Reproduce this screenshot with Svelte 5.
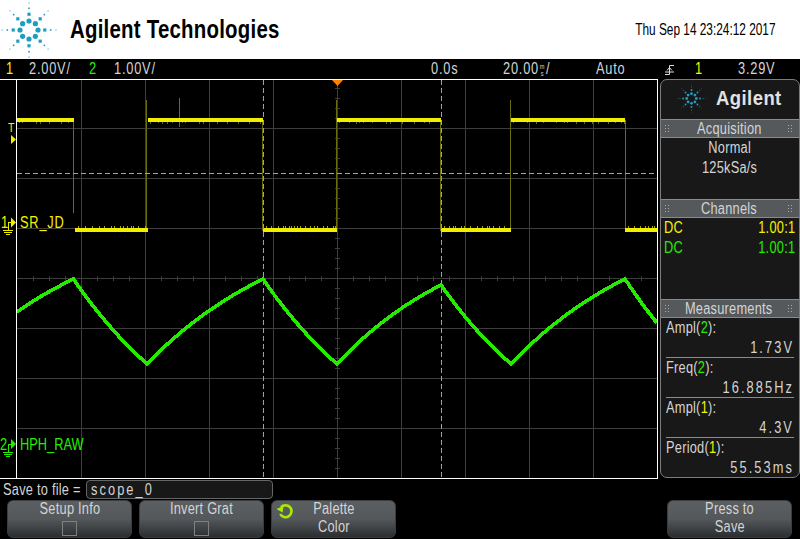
<script>
  const rayAngles = [0, 45, 90, 135, 180, 225, 270, 315];
  const rings = [
    { r: 9, s: 2.6, round: true },
    { r: 15.8, s: 1.6 },
    { r: 21.7, s: 0.8 },
    { r: 27, s: 0.5 }
  ];
  const dots = rings.flatMap((ring) =>
    rayAngles.map((a) => ({
      x: ring.r * Math.cos((a * Math.PI) / 180),
      y: ring.r * Math.sin((a * Math.PI) / 180),
      s: ring.s,
      round: ring.round
    }))
  );

  const vGrid = [81, 145, 209, 273, 337, 401, 465, 529, 593];
  const hGrid = [128, 178, 228, 278, 328, 378, 428];
  const vTicks = [];
  for (let y = 88; y < 478; y += 10) vTicks.push(y);
  const hTicks = [];
  for (let x = 33; x < 657; x += 16) hTicks.push(x);

  let seed = 1234;
  const rnd = () => ((seed = (seed * 1103515245 + 12345) & 0x7fffffff) / 0x7fffffff);

  const highs = [[17, 74], [148, 263], [337, 441], [511, 625]];
  const lows = [[75, 148], [263, 337], [441, 511], [625, 657]];
  let noiseHigh = '';
  for (const [a, b] of highs) {
    for (let x = a + 2; x < b; x += 3 + Math.floor(rnd() * 12)) {
      noiseHigh += `M${x + 0.5} 121V${123 + Math.floor(rnd() * 2)}`;
    }
  }
  let noiseLow = '';
  for (const [a, b] of lows) {
    for (let x = a + 3; x < b - 1; x += 2 + Math.floor(rnd() * 6)) {
      noiseLow += `M${x + 0.5} 228V226`;
    }
  }

  const edges = [
    [73.5, 120, 213], [146.5, 100, 228], [179.5, 98, 127], [262.5, 120, 231],
    [336.5, 100, 228], [440.5, 120, 231], [510.5, 100, 228], [625.5, 120, 231]
  ];

  function curve(x0, y0, x1, y1, bend) {
    const pts = [];
    for (let i = 0; i <= 24; i++) {
      const t = i / 24;
      const k = (1 - Math.exp(-bend * t)) / (1 - Math.exp(-bend));
      pts.push(`${(x0 + (x1 - x0) * t).toFixed(1)},${(y0 + (y1 - y0) * k).toFixed(1)}`);
    }
    return pts;
  }
  const green = [
    ...curve(17, 312, 73.5, 279, 0.4),
    ...curve(73.5, 279, 147, 364, 0.5),
    ...curve(147, 364, 263, 279, 0.75),
    ...curve(263, 279, 337, 364, 0.5),
    ...curve(337, 364, 441, 285, 0.75),
    ...curve(441, 285, 511, 364, 0.5),
    ...curve(511, 364, 625, 279, 0.75),
    ...curve(625, 279, 657, 323, 0.2)
  ].join(' ');

  const measurements = [
    { label: 'Ampl', ch: '2', value: '1.73V' },
    { label: 'Freq', ch: '2', value: '16.885Hz' },
    { label: 'Ampl', ch: '1', value: '4.3V' },
    { label: 'Period', ch: '1', value: '55.53ms' }
  ];
</script>

{#snippet logo(cls)}
  <svg class={cls} viewBox="-29 -29 58 58" aria-hidden="true">
    {#each dots as d}
      {#if d.round}
        <circle cx={d.x} cy={d.y} r={d.s} fill="#1f9dc0" />
      {:else}
        <rect x={d.x - d.s} y={d.y - d.s} width={d.s * 2} height={d.s * 2} fill="#1f9dc0" />
      {/if}
    {/each}
  </svg>
{/snippet}

{#snippet grip()}
  <svg class="grip" viewBox="0 0 5 8" aria-hidden="true">
    <path d="M0 0h1v1H0zM3 0h1v1H3zM0 3h1v1H0zM3 3h1v1H3zM0 6h1v1H0zM3 6h1v1H3z" fill="#aaa" />
  </svg>
{/snippet}

<div class="scope">
  <header class="brand">
    {@render logo('logo-large')}
    <h1>Agilent Technologies</h1>
    <time>Thu Sep 14 23:24:12 2017</time>
  </header>

  <div class="status">
    <span class="n yellow s-ch1">1</span>
    <span class="n s-v1">2.00V/</span>
    <span class="n green s-ch2">2</span>
    <span class="n s-v2">1.00V/</span>
    <span class="n s-delay">0.0s</span>
    <span class="n s-time"><span>20.00</span><span class="stack"><i>m</i><i>s</i></span><span>/</span></span>
    <span class="n s-mode">Auto</span>
    <svg class="s-edge" viewBox="0 0 9 11" aria-hidden="true">
      <path d="M0 10.5H4.5V1.5H9M2 6.5L4.5 3.5L7 6.5M0 8H9" fill="none" stroke="#ddd" stroke-width="1" />
    </svg>
    <span class="n yellow s-src">1</span>
    <span class="n s-level">3.29V</span>
  </div>

  <div class="middle">
    <div class="screen">
      <svg class="canvas" viewBox="0 0 658 400" aria-hidden="true">
        <g transform="translate(0,-79)">
          <g stroke="#3d3d3d" stroke-width="1" shape-rendering="crispEdges">
            {#each vGrid as x}<line x1={x + 0.5} x2={x + 0.5} y1="80" y2="478" />{/each}
            {#each hGrid as y}<line x1="17" x2="657" y1={y + 0.5} y2={y + 0.5} />{/each}
            {#each vTicks as y}<line x1="335" x2="340" y1={y + 0.5} y2={y + 0.5} />{/each}
            {#each hTicks as x}<line x1={x + 0.5} x2={x + 0.5} y1="276" y2="281" />{/each}
          </g>

          <g stroke="#6c6c0c" stroke-width="1" shape-rendering="crispEdges">
            {#each edges as [x, a, b]}<line x1={x} x2={x} y1={a} y2={b} />{/each}
            <path d={noiseHigh} fill="none" />
          </g>
          <path d={noiseLow} stroke="#a8a800" stroke-width="1" shape-rendering="crispEdges" fill="none" />
          <g fill="#f2ee00" shape-rendering="crispEdges">
            {#each highs as [a, b]}<rect x={a} y="118" width={b - a} height="4" />{/each}
            {#each lows as [a, b]}<rect x={a} y="228" width={b - a} height="4" />{/each}
          </g>

          <g stroke="#ef9322" stroke-width="1" shape-rendering="crispEdges" stroke-dasharray="5 3">
            <line x1="263.5" x2="263.5" y1="80" y2="478" />
            <line x1="441.5" x2="441.5" y1="80" y2="478" />
            <line x1="17" x2="657" y1="173.5" y2="173.5" />
          </g>

          <polygon points="332,80 343,80 337.5,86" fill="#ff8000" />

          <polyline points={green} fill="none" stroke="#23ec00" stroke-width="3.6" stroke-linejoin="round" shape-rendering="crispEdges" />

          <g fill="#f2ee00">
            <polygon points="11,135 16,139.5 11,144" />
            <polygon points="11,217.5 16,222.5 11,227.5" />
          </g>
          <path d="M11 222.5H8.5V230.5M3 230.5H13M4 232.5H12M6 234.5H10" fill="none" stroke="#f2ee00" stroke-width="1" shape-rendering="crispEdges" />
          <polygon points="11,439 16,444 11,449" fill="#23ec00" />
          <path d="M11 444.5H8.5V452.5M3 452.5H13M4 454.5H12M6 456.5H10" fill="none" stroke="#23ec00" stroke-width="1" shape-rendering="crispEdges" />
        </g>
      </svg>
      <span class="mark n t yellow">T</span>
      <span class="mark n n1 yellow">1</span>
      <span class="mark n l1 yellow">SR_JD</span>
      <span class="mark n n2 green">2</span>
      <span class="mark n l2 green">HPH_RAW</span>
    </div>

    <aside class="panel">
      <div class="panel-logo">
        {@render logo('logo-small')}
        <strong>Agilent</strong>
      </div>

      <div class="bar">{@render grip()}<span class="n c">Acquisition</span>{@render grip()}</div>
      <div class="acq">
        <p class="n c">Normal</p>
        <p class="n c">125kSa/s</p>
      </div>

      <div class="bar">{@render grip()}<span class="n c">Channels</span>{@render grip()}</div>
      <div class="channels">
        <p class="yellow"><span class="n">DC</span><span class="n r">1.00:1</span></p>
        <p class="green"><span class="n">DC</span><span class="n r">1.00:1</span></p>
      </div>

      <div class="bar">{@render grip()}<span class="n c">Measurements</span>{@render grip()}</div>
      <div class="meas">
        {#each measurements as m}
          <div class="meas-row">
            <p class="n lab">{m.label}(<span class={m.ch === '1' ? 'yellow' : 'green'}>{m.ch}</span>):</p>
            <p class="n r val">{m.value}</p>
          </div>
        {/each}
      </div>
    </aside>
  </div>

  <div class="save">
    <label class="n" for="fname">Save to file =</label>
    <div id="fname" class="field"><span class="n">scope_0</span></div>
  </div>

  <div class="softkeys">
    <div class="key"><span class="n c">Setup Info</span><i class="check"></i></div>
    <div class="key"><span class="n c">Invert Grat</span><i class="check"></i></div>
    <div class="key">
      <svg class="cycle" viewBox="0 0 18 18" aria-hidden="true">
        <path d="M5 5.2A6 6 0 1 1 4.2 12" fill="none" stroke="#a9ec00" stroke-width="2.6" />
        <polygon points="0.5,7 7.5,4 6.5,10.5" fill="#a9ec00" />
      </svg>
      <span class="n c">Palette</span><span class="n c">Color</span>
    </div>
    <div class="spacer"></div>
    <div class="key"><span class="n c">Press to</span><span class="n c">Save</span></div>
  </div>
</div>

<style>
  :global(body) {
    margin: 0;
    background: #000;
  }
  .scope {
    width: 800px;
    height: 539px;
    overflow: hidden;
    background: #000;
    color: #d4d4d4;
    font-family: "Liberation Sans", sans-serif;
    font-size: 16px;
    letter-spacing: 0.3px;
  }
  p { margin: 0; }
  .yellow { color: #f6f200; }
  .green { color: #25ec00; }
  .n {
    display: inline-block;
    white-space: nowrap;
    transform: scaleX(0.8);
    transform-origin: left center;
  }
  .c { transform-origin: center center; }
  .r { transform-origin: right center; }

  .brand {
    height: 59px;
    background: #fff;
    display: flex;
    align-items: center;
    color: #000;
  }
  .logo-large { width: 58px; height: 58px; flex: none; margin-right: 12px; }
  .brand h1 {
    margin: 0;
    font-size: 26px;
    font-weight: 700;
    letter-spacing: 0.3px;
    white-space: nowrap;
    transform: scaleX(0.785);
    transform-origin: left center;
  }
  .brand time {
    margin-left: auto;
    margin-right: 25px;
    font-size: 16px;
    letter-spacing: 0;
    white-space: nowrap;
    transform: scaleX(0.74);
    transform-origin: right center;
  }

  .status {
    height: 20px;
    display: flex;
    align-items: center;
    line-height: 20px;
    letter-spacing: 1px;
  }
  .s-ch1 { margin-left: 6px; width: 23px; }
  .s-v1 { width: 60px; }
  .s-ch2 { width: 25px; }
  .s-v2 { width: 317px; }
  .s-delay { width: 72px; }
  .s-time { width: 93px; display: inline-flex; align-items: center; }
  .s-mode { width: 69px; }
  .s-edge { width: 9px; height: 11px; margin-right: 21px; flex: none; }
  .s-src { width: 43px; }
  .stack {
    display: inline-flex;
    flex-direction: column;
    line-height: 7px;
    font-size: 7px;
    letter-spacing: 0;
    align-items: center;
    margin: 2px 2px 0 1px;
  }
  .stack i { font-style: normal; }

  .middle {
    height: 400px;
    display: flex;
  }
  .screen {
    width: 658px;
    height: 400px;
    box-sizing: border-box;
    position: relative;
    flex: none;
    border-top: 1px solid #fff;
    border-bottom: 1px solid #fff;
    border-right: 1px solid #fff;
    overflow: hidden;
  }
  .canvas {
    position: absolute;
    left: 0;
    top: -1px;
    width: 658px;
    height: 400px;
  }
  .screen::before {
    content: "";
    position: absolute;
    left: 16px;
    top: 0;
    bottom: 0;
    width: 1px;
    background: #fff;
    z-index: 1;
  }
  .mark { position: absolute; line-height: 16px; }
  .t { left: 8px; top: 40px; font-size: 13px; }
  .n1 { left: 1px; top: 135px; }
  .l1 { left: 20px; top: 135px; letter-spacing: 1px; }
  .n2 { left: 0; top: 357px; }
  .l2 { left: 20px; top: 357px; letter-spacing: 0; }

  .panel {
    width: 140px;
    height: 399px;
    margin-left: 2px;
    box-sizing: border-box;
    background: #181818;
    border: 1px solid #7c7c7c;
    border-radius: 7px;
    overflow: hidden;
    flex: none;
    display: flex;
    flex-direction: column;
  }
  .panel-logo {
    height: 39px;
    box-sizing: border-box;
    padding-bottom: 3px;
    flex: none;
    display: flex;
    align-items: center;
  }
  .logo-small { width: 31px; height: 31px; margin-left: 15px; margin-right: 9px; flex: none; }
  .panel-logo strong {
    font-size: 21px;
    font-weight: 700;
    letter-spacing: 0.5px;
    color: #e2e2e2;
    transform: scaleX(0.88);
    transform-origin: left center;
  }
  .bar {
    height: 19px;
    box-sizing: border-box;
    flex: none;
    background: #55595c;
    border-top: 1px solid #8b8b8b;
    border-bottom: 1px solid #8b8b8b;
    display: flex;
    align-items: center;
    justify-content: space-between;
    padding: 0 6px 0 4px;
    line-height: 17px;
  }
  .grip { width: 5px; height: 8px; flex: none; }
  .acq {
    height: 61px;
    flex: none;
    text-align: center;
    line-height: 20px;
    display: flex;
    flex-direction: column;
    align-items: center;
  }
  .channels {
    height: 81px;
    flex: none;
    line-height: 20px;
    padding: 0 4px 0 3px;
    box-sizing: border-box;
  }
  .channels p { display: flex; justify-content: space-between; }
  .meas { flex: 1; display: flex; flex-direction: column; padding: 0 5px; }
  .meas-row {
    height: 40px;
    box-sizing: border-box;
    flex: none;
    line-height: 20px;
    border-bottom: 1px solid #8b8b8b;
  }
  .meas-row:last-child { border-bottom: none; }
  .lab { display: block; }
  .val { display: block; text-align: right; letter-spacing: 2.6px; }

  .save {
    height: 21px;
    display: flex;
    align-items: center;
    padding-left: 3px;
  }
  .save label { width: 83px; flex: none; }
  .field {
    width: 187px;
    height: 19px;
    box-sizing: border-box;
    background: #181818;
    border: 1px solid #666;
    border-radius: 4px;
    line-height: 17px;
    padding-left: 4px;
    letter-spacing: 2.6px;
  }

  .softkeys {
    height: 39px;
    display: flex;
    padding-left: 7px;
    gap: 7px;
  }
  .spacer { width: 257px; flex: none; }
  .key {
    width: 125px;
    height: 38px;
    box-sizing: border-box;
    flex: none;
    border-radius: 6px;
    border: 1px solid #3a3d3f;
    background: linear-gradient(#5b5f62 0%, #54585b 50%, #2b2e30 100%);
    display: flex;
    flex-direction: column;
    align-items: center;
    line-height: 18px;
    position: relative;
  }
  .key span:first-of-type { margin-top: -1px; }
  .check {
    width: 15px;
    height: 15px;
    border: 1px solid #808080;
    box-sizing: border-box;
    margin-top: 3px;
  }
  .cycle {
    position: absolute;
    left: 4px;
    top: 1px;
    width: 18px;
    height: 18px;
  }
</style>
